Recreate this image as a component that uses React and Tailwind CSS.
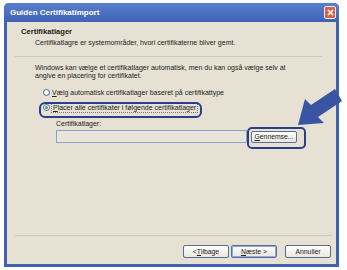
import React from "react";

const font = { fontFamily: '"Liberation Sans", Arial, sans-serif' };

function Radio({ checked }) {
  return (
    <span className="relative flex h-[7px] w-[7px] shrink-0 items-center justify-center rounded-full border border-[#3f6aa8] bg-white">
      {checked && <span className="h-[3px] w-[3px] rounded-full bg-[#3caa3c]" />}
    </span>
  );
}

function Btn({ children, def }) {
  return (
    <div
      className={`flex h-[13px] w-[46px] items-center justify-center rounded-[2px] border border-[#5a6f8f] bg-gradient-to-b from-[#fdfdfb] to-[#e9e7e0] text-[6.8px] text-[#222] ${
        def ? "shadow-[inset_0_0_0_1px_#8ea8e0]" : ""
      }`}
    >
      {children}
    </div>
  );
}

export default function App() {
  return (
    <div className="relative h-[270px] w-[347px] overflow-hidden bg-white" style={font}>
      <div className="pl-[4px] pt-[3px]">
        <div className="flex h-[264px] w-[335px] flex-col rounded-t-[5px] bg-[#3f63b3]">
          {/* title bar */}
          <div className="flex h-[19px] items-center justify-between rounded-t-[5px] bg-gradient-to-b from-[#5a7fcf] to-[#3d62b3] pl-[6px] pr-[3px]">
            <span className="text-[8px] font-bold text-white">Guiden Certifikatimport</span>
            <span className="flex h-[13px] w-[12px] items-center justify-center rounded-[2px] border border-[#e8ecf5] bg-[#d8634d]">
              <svg width="7" height="7" viewBox="0 0 7 7">
                <path d="M1 1L6 6M6 1L1 6" stroke="white" strokeWidth="1.6" />
              </svg>
            </span>
          </div>
          {/* body */}
          <div className="mx-[3px] mb-[3px] flex flex-1 flex-col bg-[#e6e1d3] text-[7px] leading-[9px] text-[#222]">
            <div className="pl-[14px] pt-[5px]">
              <div className="text-[7.6px] font-bold">Certifikatlager</div>
              <div className="mt-[2px] pl-[14px]">
                Certifikatlagre er systemområder, hvori certifikaterne bliver gemt.
              </div>
            </div>
            <div className="ml-[8px] mr-[14px] mt-[9px] h-px bg-[#cdc8ba]" />
            <div className="pl-[28px] pt-[7px] leading-[8px]">
              <div>Windows kan vælge et certifikatlager automatisk, men du kan også vælge selv at</div>
              <div>angive en placering for certifikatet.</div>
            </div>
            <div className="mt-[7px] flex h-[10px] items-center gap-[2px] pl-[36px]">
              <Radio />
              <span>
                <span className="underline">V</span>ælg automatisk certifikatlager baseret på certifikattype
              </span>
            </div>
            <div className="mt-[5px] flex h-[10px] items-center gap-[2px] pl-[36px]">
              <Radio checked />
              <span className="px-px outline outline-1 outline-dotted outline-[#777]">
                <span className="underline">P</span>lacer alle certifikater i følgende certifikatlager
              </span>
            </div>
            <div className="mt-[8px] pl-[49px] leading-[8px]">Certifikatlager:</div>
            <div className="mt-[2px] flex items-center gap-[4px] pl-[49px]">
              <div className="h-[13px] w-[191px] border border-[#8aa4c8] bg-[#e9e5da]" />
              <div className="flex h-[12px] w-[46px] items-center justify-center rounded-[2px] border border-[#5a6f8f] bg-gradient-to-b from-[#fdfdfb] to-[#e9e7e0] text-[6.8px]">
                <span>
                  <span className="underline">G</span>ennemse...
                </span>
              </div>
            </div>
            <div className="flex-1" />
            <div className="ml-[8px] mr-[4px] h-px bg-[#cdc8ba]" />
            <div className="mb-[6px] mt-[9px] flex items-center justify-end pr-[5px]">
              <Btn>
                &lt; <span className="underline">T</span>ilbage
              </Btn>
              <div className="w-[2px]" />
              <Btn def>
                <span className="underline">N</span>æste &gt;
              </Btn>
              <div className="w-[8px]" />
              <Btn>Annuller</Btn>
            </div>
          </div>
        </div>
      </div>

      {/* annotation overlays */}
      <div className="absolute left-[39px] top-[102px] h-[16px] w-[163px] rounded-[6px] border-2 border-[#2b3e8e]" />
      <div className="absolute left-[247px] top-[127px] h-[22px] w-[59px] rounded-[5px] border-2 border-[#2b3e8e]" />
      <svg className="absolute left-0 top-0" width="347" height="270" viewBox="0 0 347 270">
        <polygon
          points="298,125 305,99 311,105 335,89 342,101 318,117 324,123"
          fill="#3a54a4"
        />
      </svg>
    </div>
  );
}
